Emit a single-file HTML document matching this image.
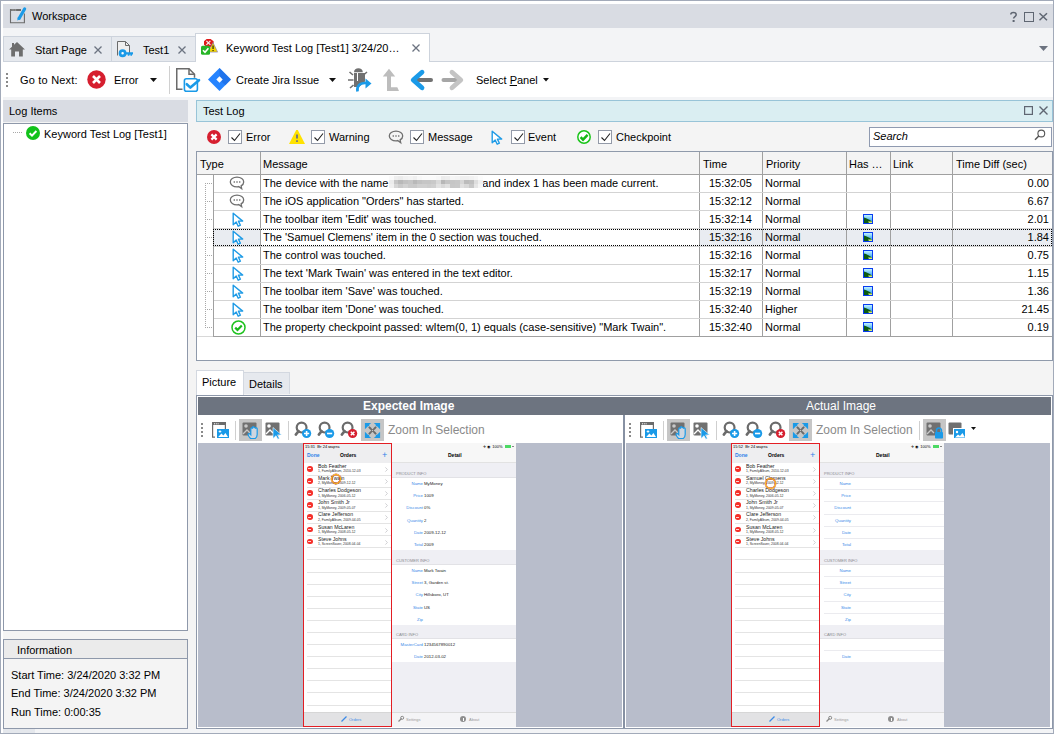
<!DOCTYPE html>
<html><head><meta charset="utf-8">
<style>
*{box-sizing:border-box}
html,body{margin:0;padding:0}
body{width:1054px;height:734px;overflow:hidden;position:relative;background:#f3f4f6;font-family:"Liberation Sans",sans-serif;font-size:11px;color:#000}
.a{position:absolute}
.t{position:absolute;white-space:pre;line-height:13px}
svg{position:absolute;overflow:visible}
.blur{display:inline-block;width:86px;height:9px;background:linear-gradient(90deg,#e4e4e4,#cfcfcf 20%,#dedede 40%,#c9c9c9 60%,#d9d9d9 80%,#cdcdcd);vertical-align:-1px;border-radius:3px;filter:blur(1px)}
.dotsh{background:repeating-linear-gradient(90deg,#a8a8a8 0 1px,transparent 1px 2px)}
.dotsv{background:repeating-linear-gradient(180deg,#a8a8a8 0 1px,transparent 1px 2px)}
.cb{position:absolute;width:14px;height:14px;border:1px solid #939aa8;background:#fff}
.tt{position:absolute;white-space:pre;font-size:5px;line-height:6px}
.sep{position:absolute;width:1px;background:#d0d0d0}
</style></head><body>
<!-- frame -->
<div class="a" style="left:0;top:0;width:1054px;height:734px;border:1px solid #a2aab9"></div>
<div class="a" style="left:1px;top:1px;width:1052px;height:3px;background:#fff"></div>
<div class="a" style="left:1px;top:1px;width:2px;height:732px;background:#fff"></div>
<div class="a" style="left:3px;top:729px;width:32px;height:4px;background:#e4e7ec"></div>
<!-- title bar -->
<div class="a" style="left:3px;top:4px;width:1050px;height:24px;background:#d9dce3"></div>
<div class="t" style="left:32px;top:10px">Workspace</div>

<!-- tab strip -->
<div class="a" style="left:3px;top:36px;width:109px;height:26px;background:#e6e9ee;border:1px solid #cdd3dc;border-bottom:none"></div>
<div class="a" style="left:112px;top:36px;width:84px;height:26px;background:#e6e9ee;border:1px solid #cdd3dc;border-bottom:none;border-left:none"></div>
<div class="a" style="left:3px;top:61px;width:1050px;height:1px;background:#cdd3dc"></div>
<div class="a" style="left:195px;top:33px;width:235px;height:29px;background:#fff;border:1px solid #cdd3dc;border-bottom:none"></div>
<div class="t" style="left:35px;top:44px">Start Page</div>
<div class="t" style="left:143px;top:44px">Test1</div>
<div class="t" style="left:226px;top:42px">Keyword Test Log [Test1] 3/24/20…</div>

<!-- toolbar -->
<div class="a" style="left:3px;top:62px;width:1050px;height:35px;background:#fff"></div>
<div class="t" style="left:20px;top:74px;letter-spacing:.2px">Go to Next:</div>
<div class="t" style="left:114px;top:74px">Error</div>
<div class="t" style="left:236px;top:74px">Create Jira Issue</div>
<div class="t" style="left:476px;top:74px">Select <u>P</u>anel</div>

<div class="a" style="left:3px;top:122px;width:1050px;height:607px;background:#f4f4f4"></div>
<!-- left panel -->
<div class="a" style="left:3px;top:100px;width:185px;height:22px;background:#d9dce3"></div>
<div class="t" style="left:9px;top:105px">Log Items</div>
<div class="a" style="left:3px;top:123px;width:185px;height:508px;background:#fff;border:1px solid #8e98aa"></div>
<div class="t" style="left:44px;top:128px">Keyword Test Log [Test1]</div>

<div class="a" style="left:3px;top:639px;width:185px;height:90px;background:#f4f4f4;border:1px solid #8e98aa"></div>
<div class="a" style="left:4px;top:640px;width:183px;height:19px;background:#ebebeb;border-bottom:1px solid #8e98aa"></div>
<div class="t" style="left:17px;top:644px">Information</div>
<div class="t" style="left:11px;top:669px">Start Time: 3/24/2020 3:32 PM</div>
<div class="t" style="left:11px;top:687px">End Time: 3/24/2020 3:32 PM</div>
<div class="t" style="left:11px;top:706px">Run Time: 0:00:35</div>

<!-- test log panel -->
<div class="a" style="left:196px;top:100px;width:857px;height:22px;background:#daeef2;border:1px solid #98c4d8"></div>
<div class="t" style="left:203px;top:105px">Test Log</div>

<!-- filter bar -->
<div class="cb" style="left:228px;top:130px"><svg style="left:1px;top:1px" width="11" height="11" viewBox="0 0 11 11"><path d="M1.5 5.5l3 3 5.5-7" fill="none" stroke="#222" stroke-width="1.1"/></svg></div>
<div class="t" style="left:246px;top:131px">Error</div>
<div class="cb" style="left:311px;top:130px"><svg style="left:1px;top:1px" width="11" height="11" viewBox="0 0 11 11"><path d="M1.5 5.5l3 3 5.5-7" fill="none" stroke="#222" stroke-width="1.1"/></svg></div>
<div class="t" style="left:329px;top:131px">Warning</div>
<div class="cb" style="left:410px;top:130px"><svg style="left:1px;top:1px" width="11" height="11" viewBox="0 0 11 11"><path d="M1.5 5.5l3 3 5.5-7" fill="none" stroke="#222" stroke-width="1.1"/></svg></div>
<div class="t" style="left:428px;top:131px">Message</div>
<div class="cb" style="left:511px;top:130px"><svg style="left:1px;top:1px" width="11" height="11" viewBox="0 0 11 11"><path d="M1.5 5.5l3 3 5.5-7" fill="none" stroke="#222" stroke-width="1.1"/></svg></div>
<div class="t" style="left:528px;top:131px">Event</div>
<div class="cb" style="left:598px;top:130px"><svg style="left:1px;top:1px" width="11" height="11" viewBox="0 0 11 11"><path d="M1.5 5.5l3 3 5.5-7" fill="none" stroke="#222" stroke-width="1.1"/></svg></div>
<div class="t" style="left:616px;top:131px">Checkpoint</div>
<div class="a" style="left:869px;top:127px;width:183px;height:20px;background:#fff;border:1px solid #8f9ab0"></div>
<div class="t" style="left:873px;top:130px;font-style:italic">Search</div>


<!-- top icons -->
<svg style="left:0;top:0" width="1" height="1"></svg>
<svg style="left:10px;top:7px" width="17" height="17" viewBox="0 0 17 17"><path d="M14.4 6.5v9.3H.5V2.5h9.5" fill="none" stroke="#6b6b6b" stroke-width="1.1"/><rect x="0" y="2" width="11" height="2" fill="#6b6b6b"/><rect x="1.6" y="2.6" width="1" height=".8" fill="#d8d8d8"/><rect x="3.4" y="2.6" width="1" height=".8" fill="#d8d8d8"/><rect x="5.2" y="2.6" width="1" height=".8" fill="#d8d8d8"/><path d="M9.2 11.2L14.6 2" stroke="#1a9ae8" stroke-width="3.2" stroke-linecap="round"/><path d="M7.3 13.6l.5-3.4 3 1.7z" fill="#1a9ae8"/></svg>
<svg style="left:9px;top:42px" width="16" height="15" viewBox="0 0 16 15"><path d="M0 7.5L8 0l8 7.5h-2.2V14.5H10V9.5H6v5H2.2V7.5z" fill="#6e6e6e"/><rect x="3" y="1" width="2" height="4" fill="#6e6e6e"/></svg>
<svg style="left:94px;top:46px" width="8" height="8" viewBox="0 0 8 8"><path d="M0.5 0.5l7 7M7.5 0.5l-7 7" stroke="#6c7380" stroke-width="1.3"/></svg>
<svg style="left:117px;top:41px" width="17" height="16" viewBox="0 0 17 16"><path d="M.5 14.5V.5h8l4 4v9" fill="#efefef" stroke="#6b6b6b" stroke-width="1"/><path d="M8.5.5v4h4" fill="none" stroke="#6b6b6b" stroke-width="1"/><circle cx="5.6" cy="12.3" r="2.6" fill="#fff" stroke="#1a9ae8" stroke-width="2.7"/><path d="M8 11.2h8v2.2h-1v1.3h-1.6v-1.3h-1v1.3H10.8v-1.3H8z" fill="#1a9ae8"/></svg>
<svg style="left:178px;top:46px" width="8" height="8" viewBox="0 0 8 8"><path d="M0.5 0.5l7 7M7.5 0.5l-7 7" stroke="#6c7380" stroke-width="1.3"/></svg>
<svg style="left:201px;top:39px" width="17" height="17" viewBox="0 0 17 17"><path d="M5.6 0h4l3 2.2v3.6l-3 2.2h-4l-2.6-2.2V2.2z" fill="#e01b1b"/><path d="M5.4 1.8l4 4M9.4 1.8l-4 4" stroke="#f2f2f2" stroke-width="1.2"/><path d="M12 3.5l4.6 9.6H7.4z" fill="#f5d800" stroke="#7b72b8" stroke-width=".6"/><rect x="11.5" y="6.5" width="1.1" height="3.5" fill="#111"/><rect x="11.5" y="11" width="1.1" height="1.1" fill="#111"/><rect x="0" y="6.8" width="9" height="9" rx="1.5" fill="#26b526"/><path d="M2 11.2l2 2 3.4-4" fill="none" stroke="#fff" stroke-width="1.6"/></svg>
<svg style="left:412px;top:44px" width="8" height="8" viewBox="0 0 8 8"><path d="M0.5 0.5l7 7M7.5 0.5l-7 7" stroke="#6c7380" stroke-width="1.3"/></svg>
<svg style="left:1010px;top:12px" width="7" height="10" viewBox="0 0 7 10"><path d="M.8 2.6C.8 1.3 2 .5 3.4.5S6.2 1.3 6.2 2.7c0 1.8-2.6 1.9-2.6 3.9" fill="none" stroke="#5f6672" stroke-width="1.5"/><rect x="2.6" y="8" width="2" height="2" fill="#5f6672"/></svg>
<div class="a" style="left:1024px;top:12px;width:9.5px;height:9.5px;border:1.5px solid #5f6672"></div>
<svg style="left:1039px;top:13px" width="8.5" height="7.5" viewBox="0 0 9 8"><path d="M.5 .3l8 7.4M8.5 .3l-8 7.4" stroke="#5f6672" stroke-width="1.6"/></svg>
<svg style="left:1039px;top:46px" width="9" height="5" viewBox="0 0 9 5"><path d="M0 0h9L4.5 5z" fill="#6c7380"/></svg>
<!-- toolbar icons -->
<div class="a" style="left:6px;top:73px;width:2px;height:14px;background:repeating-linear-gradient(180deg,#8a8a8a 0 2px,transparent 2px 4px)"></div>
<svg style="left:87px;top:70px" width="19" height="19" viewBox="0 0 19 19"><circle cx="9.5" cy="9.5" r="9.2" fill="#d61f2f"/><path d="M6 6l7 7M13 6l-7 7" stroke="#fff" stroke-width="2.6"/></svg>
<svg style="left:150px;top:78px" width="7" height="4" viewBox="0 0 7 4"><path d="M0 0h7L3.5 4z" fill="#111"/></svg>
<div class="sep" style="left:169px;top:66px;height:28px"></div>
<svg style="left:176px;top:68px" width="24" height="24" viewBox="0 0 24 24"><path d="M6.5 21.2H.75V.75H13l5.5 5.5v3.5" fill="none" stroke="#6b6b6b" stroke-width="1.5"/><path d="M13 .75v5.5h5.5" fill="none" stroke="#6b6b6b" stroke-width="1.5"/><rect x="8.4" y="10.8" width="13" height="12.4" rx="2" fill="#fff" stroke="#1a9ae8" stroke-width="1.6"/><path d="M10.8 16.2l3.6 3.4 8.6-7.4" fill="none" stroke="#1a9ae8" stroke-width="2.6" stroke-linecap="round" stroke-linejoin="round"/></svg>
<svg style="left:208px;top:68px" width="23" height="23" viewBox="0 0 23 23"><path d="M11.5 0L23 11.5 11.5 23 0 11.5z" fill="#2684ff"/><path d="M11.5 0L23 11.5 17.3 17.2 11.5 11.5z" fill="#1e6fe6" opacity=".8"/><path d="M11.5 8.3l3.2 3.2-3.2 3.2-3.2-3.2z" fill="#fff"/></svg>
<svg style="left:329px;top:78px" width="7" height="4" viewBox="0 0 7 4"><path d="M0 0h7L3.5 4z" fill="#111"/></svg>
<svg style="left:348px;top:68px" width="25" height="24" viewBox="0 0 25 24"><path d="M6 4.2a4.4 4 0 0 1 8.8 0z" fill="#707070"/><path d="M6 5h11v8.5L11 19H6z" fill="#707070"/><path d="M9.5 5v8" stroke="#fff" stroke-width="1"/><path d="M1.5 4l3.5 3M19 4l-3.5 3M0 12h5.5M2 20l3.5-3" stroke="#707070" stroke-width="1.6"/><path d="M9.5 23.5c-1-5 2-8.5 7.5-8.5h1" fill="none" stroke="#1a9ae8" stroke-width="2.6"/><path d="M17.5 10.5l6 5-6 5z" fill="#1a9ae8"/></svg>
<svg style="left:383px;top:68px" width="17" height="24" viewBox="0 0 17 24"><path d="M6 .8L12.2 8.5H8V19.2H14.3L16 23H4V8.5H-.2z" fill="#bdbdbd"/></svg>
<svg style="left:410px;top:69px" width="24" height="22" viewBox="0 0 24 22"><path d="M8.5 11h12.5" stroke="#727272" stroke-width="4" stroke-linecap="round"/><path d="M12 3.2L3.2 11l8.8 7.8" fill="none" stroke="#1a9ae8" stroke-width="4.8" stroke-linecap="round" stroke-linejoin="round"/></svg>
<svg style="left:441px;top:69px" width="24" height="22" viewBox="0 0 24 22"><path d="M2.5 11h12.5" stroke="#a6a6a6" stroke-width="4" stroke-linecap="round"/><path d="M11 3.2L19.8 11 11 18.8" fill="none" stroke="#c4c4c4" stroke-width="4.8" stroke-linecap="round" stroke-linejoin="round"/></svg>
<svg style="left:543px;top:78px" width="6" height="4" viewBox="0 0 6 4"><path d="M0 0h6L3 3.5z" fill="#111"/></svg>
<!-- log tree icon -->
<div class="a dotsh" style="left:13px;top:132px;width:10px;height:1px"></div>
<svg style="left:26px;top:126px" width="14" height="14" viewBox="0 0 14 14"><circle cx="7" cy="7" r="7" fill="#12c21a"/><path d="M3.6 7.2l2.4 2.4 4.4-4.6" fill="none" stroke="#fff" stroke-width="2"/></svg>
<!-- log panel icons -->
<svg style="left:1024px;top:106px" width="9" height="9" viewBox="0 0 9 9"><rect x=".6" y=".6" width="7.8" height="7.8" fill="none" stroke="#5f6672" stroke-width="1.2"/></svg>
<svg style="left:1039px;top:106px" width="9" height="9" viewBox="0 0 9 9"><path d="M.5 .5l8 8M8.5 .5l-8 8" stroke="#5f6672" stroke-width="1.4"/></svg>
<!-- filter icons -->
<svg style="left:207px;top:130px" width="14" height="14" viewBox="0 0 14 14"><circle cx="7" cy="7" r="7" fill="#d61f2f"/><path d="M4.4 4.4l5.2 5.2M9.6 4.4l-5.2 5.2" stroke="#fff" stroke-width="2.2"/></svg>
<svg style="left:289px;top:130px" width="16" height="14" viewBox="0 0 16 14"><path d="M7.2 0h1.6L16 14H0z" fill="#ffe200"/><rect x="7.2" y="4.5" width="1.6" height="4" fill="#56609a"/><rect x="7.2" y="10.3" width="1.6" height="1.6" fill="#56609a"/></svg>
<svg style="left:388px;top:130px" width="16" height="14" viewBox="0 0 16 14"><path d="M8 1.2C4.2 1.2 1.3 3.3 1.3 6s2.9 4.8 6.7 4.8c.6 0 1.2 0 1.7-.2l3 2.2-.6-2.9c1.6-.9 2.6-2.3 2.6-3.9 0-2.7-2.9-4.8-6.7-4.8z" fill="none" stroke="#6f6f6f" stroke-width="1.3"/><rect x="4.6" y="5.3" width="1.4" height="1.4" fill="#6f6f6f"/><rect x="7.3" y="5.3" width="1.4" height="1.4" fill="#6f6f6f"/><rect x="10" y="5.3" width="1.4" height="1.4" fill="#6f6f6f"/></svg>
<svg style="left:491px;top:130px" width="12" height="15" viewBox="0 0 12 15"><path d="M1.2 1.2v11.6l3-2.8 2 4.2 2.2-1-2-4.1h4.3z" fill="#fff" stroke="#1f9be6" stroke-width="1.4" stroke-linejoin="round"/></svg>
<svg style="left:577px;top:130px" width="14" height="14" viewBox="0 0 14 14"><circle cx="7" cy="7" r="6.2" fill="#fff" stroke="#19c419" stroke-width="1.5"/><path d="M3.6 7.2l2.4 2.4 4.6-4.7" fill="none" stroke="#14b814" stroke-width="2.5"/></svg>
<svg style="left:1034px;top:129px" width="12" height="12" viewBox="0 0 12 12"><circle cx="7.3" cy="4.5" r="3.4" fill="none" stroke="#555" stroke-width="1.1"/><path d="M4.8 7L1 10.8" stroke="#555" stroke-width="1.5"/></svg>

<div class="a" style="left:196px;top:151px;width:857px;height:210px;background:#fff;border:1px solid #8f9aab"></div>
<div class="a" style="left:197px;top:152px;width:855px;height:22px;background:#f4f4f4"></div>
<div class="a" style="left:197px;top:174px;width:855px;height:1px;background:#a0a0a0"></div>
<div class="a" style="left:214px;top:229px;width:46px;height:17px;background:#e9ecf1"></div>
<div class="a" style="left:700px;top:229px;width:352px;height:17px;background:#e9ecf1"></div>
<div class="a" style="left:260px;top:152px;width:1px;height:185px;background:#a0a0a0"></div>
<div class="a" style="left:699px;top:152px;width:1px;height:185px;background:#a0a0a0"></div>
<div class="a" style="left:762px;top:152px;width:1px;height:185px;background:#a0a0a0"></div>
<div class="a" style="left:846px;top:152px;width:1px;height:185px;background:#a0a0a0"></div>
<div class="a" style="left:890px;top:152px;width:1px;height:185px;background:#a0a0a0"></div>
<div class="a" style="left:952px;top:152px;width:1px;height:185px;background:#a0a0a0"></div>
<div class="a" style="left:213px;top:175px;width:1px;height:162px;background:#a0a0a0"></div>
<div class="t" style="left:200px;top:158px">Type</div>
<div class="t" style="left:263px;top:158px">Message</div>
<div class="t" style="left:703px;top:158px">Time</div>
<div class="t" style="left:766px;top:158px">Priority</div>
<div class="t" style="left:849px;top:158px">Has …</div>
<div class="t" style="left:893px;top:158px">Link</div>
<div class="t" style="left:956px;top:158px">Time Diff (sec)</div>
<div class="a" style="left:214px;top:192px;width:838px;height:1px;background:#d3d3d3"></div>
<div class="a dotsh" style="left:205px;top:183px;width:8px;height:1px"></div>
<svg style="left:229px;top:176px" width="16" height="14" viewBox="0 0 16 14"><path d="M8 1.2C4.2 1.2 1.3 3.3 1.3 6s2.9 4.8 6.7 4.8c.6 0 1.2 0 1.7-.2l3 2.2-.6-2.9c1.6-.9 2.6-2.3 2.6-3.9 0-2.7-2.9-4.8-6.7-4.8z" fill="none" stroke="#6f6f6f" stroke-width="1.3"/><rect x="4.6" y="5.3" width="1.4" height="1.4" fill="#6f6f6f"/><rect x="7.3" y="5.3" width="1.4" height="1.4" fill="#6f6f6f"/><rect x="10" y="5.3" width="1.4" height="1.4" fill="#6f6f6f"/></svg>
<div class="t" style="left:263px;top:177px">The device with the name<span style="display:inline-block;position:relative;width:93px;height:0;vertical-align:baseline;margin-left:1px"><span class="a" style="left:0;top:-11px;width:94px;height:4px;background:linear-gradient(90deg,#fafafa 0.0px 4.7px,#efefef 4.7px 9.4px,#ececec 9.4px 14.1px,#f2f2f2 14.1px 18.8px,#f4f4f4 18.8px 23.5px,#f0f0f0 23.5px 28.2px,#f8f8f8 28.2px 32.9px,#fbfbfb 32.9px 37.6px,#fbfbfb 37.6px 42.3px,#fbfbfb 42.3px 47.0px,#f8f8f8 47.0px 51.7px,#ececec 51.7px 56.4px,#eeeeee 56.4px 61.1px,#f6f6f6 61.1px 65.8px,#f4f4f4 65.8px 70.5px,#f0f0f0 70.5px 75.2px,#f0f0f0 75.2px 79.9px,#f2f2f2 79.9px 84.6px,#f6f6f6 84.6px 89.3px,#fcfcfc 89.3px 94.0px)"></span><span class="a" style="left:0;top:-7px;width:94px;height:4px;background:linear-gradient(90deg,#ececec 0.0px 4.7px,#c6c6c6 4.7px 9.4px,#b9b9b9 9.4px 14.1px,#c2c2c2 14.1px 18.8px,#c6c6c6 18.8px 23.5px,#b9b9b9 23.5px 28.2px,#c2c2c2 28.2px 32.9px,#c6c6c6 32.9px 37.6px,#c6c6c6 37.6px 42.3px,#c9c9c9 42.3px 47.0px,#d9d9d9 47.0px 51.7px,#b7b7b7 51.7px 56.4px,#c4c4c4 56.4px 61.1px,#c6c6c6 61.1px 65.8px,#c8c8c8 65.8px 70.5px,#d6d6d6 70.5px 75.2px,#bcbcbc 75.2px 79.9px,#c0c0c0 79.9px 84.6px,#dedede 84.6px 89.3px,#f0f0f0 89.3px 94.0px)"></span><span class="a" style="left:0;top:-3px;width:94px;height:4px;background:linear-gradient(90deg,#f0f0f0 0.0px 4.7px,#d6d6d6 4.7px 9.4px,#cacaca 9.4px 14.1px,#d2d2d2 14.1px 18.8px,#cacaca 18.8px 23.5px,#c9c9c9 23.5px 28.2px,#d0d0d0 28.2px 32.9px,#d0d0d0 32.9px 37.6px,#cdcdcd 37.6px 42.3px,#d0d0d0 42.3px 47.0px,#e2e2e2 47.0px 51.7px,#d8d8d8 51.7px 56.4px,#e0e0e0 56.4px 61.1px,#c8c8c8 61.1px 65.8px,#c9c9c9 65.8px 70.5px,#e0e0e0 70.5px 75.2px,#d8d8d8 75.2px 79.9px,#c8c8c8 79.9px 84.6px,#e6e6e6 84.6px 89.3px,#f6f6f6 89.3px 94.0px)"></span></span>and index 1 has been made current.</div>
<div class="t" style="left:709px;top:177px">15:32:05</div>
<div class="t" style="left:765px;top:177px">Normal</div>
<div class="t" style="right:5px;top:177px">0.00</div>
<div class="a" style="left:214px;top:210px;width:838px;height:1px;background:#d3d3d3"></div>
<div class="a dotsh" style="left:205px;top:201px;width:8px;height:1px"></div>
<svg style="left:229px;top:194px" width="16" height="14" viewBox="0 0 16 14"><path d="M8 1.2C4.2 1.2 1.3 3.3 1.3 6s2.9 4.8 6.7 4.8c.6 0 1.2 0 1.7-.2l3 2.2-.6-2.9c1.6-.9 2.6-2.3 2.6-3.9 0-2.7-2.9-4.8-6.7-4.8z" fill="none" stroke="#6f6f6f" stroke-width="1.3"/><rect x="4.6" y="5.3" width="1.4" height="1.4" fill="#6f6f6f"/><rect x="7.3" y="5.3" width="1.4" height="1.4" fill="#6f6f6f"/><rect x="10" y="5.3" width="1.4" height="1.4" fill="#6f6f6f"/></svg>
<div class="t" style="left:263px;top:195px">The iOS application "Orders" has started.</div>
<div class="t" style="left:709px;top:195px">15:32:12</div>
<div class="t" style="left:765px;top:195px">Normal</div>
<div class="t" style="right:5px;top:195px">6.67</div>
<div class="a" style="left:214px;top:228px;width:838px;height:1px;background:#d3d3d3"></div>
<div class="a dotsh" style="left:205px;top:219px;width:8px;height:1px"></div>
<svg style="left:232px;top:212px" width="12" height="15" viewBox="0 0 12 15"><path d="M1.2 1.2v11.6l3-2.8 2 4.2 2.2-1-2-4.1h4.3z" fill="#fff" stroke="#1f9be6" stroke-width="1.4" stroke-linejoin="round"/></svg>
<div class="t" style="left:263px;top:213px">The toolbar item 'Edit' was touched.</div>
<div class="t" style="left:709px;top:213px">15:32:14</div>
<div class="t" style="left:765px;top:213px">Normal</div>
<svg style="left:863px;top:214px" width="10" height="10" viewBox="0 0 10 10"><defs><linearGradient id="sk" x1="0" y1="0" x2="0" y2="1"><stop offset="0" stop-color="#bff4ff"/><stop offset="1" stop-color="#1c8ee8"/></linearGradient></defs><rect x="0" y="0" width="10" height="10" fill="#0a3cf0"/><rect x="1" y="1" width="8" height="8" fill="url(#sk)"/><path d="M1 3.5C3 3.8 5 5 9 7.5V9H1z" fill="#0b5a12"/><path d="M5 7.5l4 0V9H6z" fill="#d8f070"/></svg>
<div class="t" style="right:5px;top:213px">2.01</div>
<div class="a" style="left:214px;top:246px;width:838px;height:1px;background:#d3d3d3"></div>
<div class="a dotsh" style="left:205px;top:237px;width:8px;height:1px"></div>
<svg style="left:232px;top:230px" width="12" height="15" viewBox="0 0 12 15"><path d="M1.2 1.2v11.6l3-2.8 2 4.2 2.2-1-2-4.1h4.3z" fill="#fff" stroke="#1f9be6" stroke-width="1.4" stroke-linejoin="round"/></svg>
<div class="t" style="left:263px;top:231px">The 'Samuel Clemens' item in the 0 section was touched.</div>
<div class="t" style="left:709px;top:231px">15:32:16</div>
<div class="t" style="left:765px;top:231px">Normal</div>
<svg style="left:863px;top:232px" width="10" height="10" viewBox="0 0 10 10"><defs><linearGradient id="sk" x1="0" y1="0" x2="0" y2="1"><stop offset="0" stop-color="#bff4ff"/><stop offset="1" stop-color="#1c8ee8"/></linearGradient></defs><rect x="0" y="0" width="10" height="10" fill="#0a3cf0"/><rect x="1" y="1" width="8" height="8" fill="url(#sk)"/><path d="M1 3.5C3 3.8 5 5 9 7.5V9H1z" fill="#0b5a12"/><path d="M5 7.5l4 0V9H6z" fill="#d8f070"/></svg>
<div class="t" style="right:5px;top:231px">1.84</div>
<div class="a" style="left:214px;top:264px;width:838px;height:1px;background:#d3d3d3"></div>
<div class="a dotsh" style="left:205px;top:255px;width:8px;height:1px"></div>
<svg style="left:232px;top:248px" width="12" height="15" viewBox="0 0 12 15"><path d="M1.2 1.2v11.6l3-2.8 2 4.2 2.2-1-2-4.1h4.3z" fill="#fff" stroke="#1f9be6" stroke-width="1.4" stroke-linejoin="round"/></svg>
<div class="t" style="left:263px;top:249px">The control was touched.</div>
<div class="t" style="left:709px;top:249px">15:32:16</div>
<div class="t" style="left:765px;top:249px">Normal</div>
<svg style="left:863px;top:250px" width="10" height="10" viewBox="0 0 10 10"><defs><linearGradient id="sk" x1="0" y1="0" x2="0" y2="1"><stop offset="0" stop-color="#bff4ff"/><stop offset="1" stop-color="#1c8ee8"/></linearGradient></defs><rect x="0" y="0" width="10" height="10" fill="#0a3cf0"/><rect x="1" y="1" width="8" height="8" fill="url(#sk)"/><path d="M1 3.5C3 3.8 5 5 9 7.5V9H1z" fill="#0b5a12"/><path d="M5 7.5l4 0V9H6z" fill="#d8f070"/></svg>
<div class="t" style="right:5px;top:249px">0.75</div>
<div class="a" style="left:214px;top:282px;width:838px;height:1px;background:#d3d3d3"></div>
<div class="a dotsh" style="left:205px;top:273px;width:8px;height:1px"></div>
<svg style="left:232px;top:266px" width="12" height="15" viewBox="0 0 12 15"><path d="M1.2 1.2v11.6l3-2.8 2 4.2 2.2-1-2-4.1h4.3z" fill="#fff" stroke="#1f9be6" stroke-width="1.4" stroke-linejoin="round"/></svg>
<div class="t" style="left:263px;top:267px">The text 'Mark Twain' was entered in the text editor.</div>
<div class="t" style="left:709px;top:267px">15:32:17</div>
<div class="t" style="left:765px;top:267px">Normal</div>
<svg style="left:863px;top:268px" width="10" height="10" viewBox="0 0 10 10"><defs><linearGradient id="sk" x1="0" y1="0" x2="0" y2="1"><stop offset="0" stop-color="#bff4ff"/><stop offset="1" stop-color="#1c8ee8"/></linearGradient></defs><rect x="0" y="0" width="10" height="10" fill="#0a3cf0"/><rect x="1" y="1" width="8" height="8" fill="url(#sk)"/><path d="M1 3.5C3 3.8 5 5 9 7.5V9H1z" fill="#0b5a12"/><path d="M5 7.5l4 0V9H6z" fill="#d8f070"/></svg>
<div class="t" style="right:5px;top:267px">1.15</div>
<div class="a" style="left:214px;top:300px;width:838px;height:1px;background:#d3d3d3"></div>
<div class="a dotsh" style="left:205px;top:291px;width:8px;height:1px"></div>
<svg style="left:232px;top:284px" width="12" height="15" viewBox="0 0 12 15"><path d="M1.2 1.2v11.6l3-2.8 2 4.2 2.2-1-2-4.1h4.3z" fill="#fff" stroke="#1f9be6" stroke-width="1.4" stroke-linejoin="round"/></svg>
<div class="t" style="left:263px;top:285px">The toolbar item 'Save' was touched.</div>
<div class="t" style="left:709px;top:285px">15:32:19</div>
<div class="t" style="left:765px;top:285px">Normal</div>
<svg style="left:863px;top:286px" width="10" height="10" viewBox="0 0 10 10"><defs><linearGradient id="sk" x1="0" y1="0" x2="0" y2="1"><stop offset="0" stop-color="#bff4ff"/><stop offset="1" stop-color="#1c8ee8"/></linearGradient></defs><rect x="0" y="0" width="10" height="10" fill="#0a3cf0"/><rect x="1" y="1" width="8" height="8" fill="url(#sk)"/><path d="M1 3.5C3 3.8 5 5 9 7.5V9H1z" fill="#0b5a12"/><path d="M5 7.5l4 0V9H6z" fill="#d8f070"/></svg>
<div class="t" style="right:5px;top:285px">1.36</div>
<div class="a" style="left:214px;top:318px;width:838px;height:1px;background:#d3d3d3"></div>
<div class="a dotsh" style="left:205px;top:309px;width:8px;height:1px"></div>
<svg style="left:232px;top:302px" width="12" height="15" viewBox="0 0 12 15"><path d="M1.2 1.2v11.6l3-2.8 2 4.2 2.2-1-2-4.1h4.3z" fill="#fff" stroke="#1f9be6" stroke-width="1.4" stroke-linejoin="round"/></svg>
<div class="t" style="left:263px;top:303px">The toolbar item 'Done' was touched.</div>
<div class="t" style="left:709px;top:303px">15:32:40</div>
<div class="t" style="left:765px;top:303px">Higher</div>
<svg style="left:863px;top:304px" width="10" height="10" viewBox="0 0 10 10"><defs><linearGradient id="sk" x1="0" y1="0" x2="0" y2="1"><stop offset="0" stop-color="#bff4ff"/><stop offset="1" stop-color="#1c8ee8"/></linearGradient></defs><rect x="0" y="0" width="10" height="10" fill="#0a3cf0"/><rect x="1" y="1" width="8" height="8" fill="url(#sk)"/><path d="M1 3.5C3 3.8 5 5 9 7.5V9H1z" fill="#0b5a12"/><path d="M5 7.5l4 0V9H6z" fill="#d8f070"/></svg>
<div class="t" style="right:5px;top:303px">21.45</div>
<div class="a" style="left:214px;top:336px;width:838px;height:1px;background:#a0a0a0"></div>
<div class="a dotsh" style="left:205px;top:327px;width:8px;height:1px"></div>
<svg style="left:231px;top:320px" width="15" height="15" viewBox="0 0 15 15"><circle cx="7.5" cy="7.5" r="6.5" fill="#fff" stroke="#1ec21e" stroke-width="1.5"/><path d="M4.2 7.6l2.3 2.3 4.3-4.4" fill="none" stroke="#18b818" stroke-width="2.2"/></svg>
<div class="t" style="left:263px;top:321px">The property checkpoint passed: wItem(0, 1) equals (case-sensitive) "Mark Twain".</div>
<div class="t" style="left:709px;top:321px">15:32:40</div>
<div class="t" style="left:765px;top:321px">Normal</div>
<svg style="left:863px;top:322px" width="10" height="10" viewBox="0 0 10 10"><defs><linearGradient id="sk" x1="0" y1="0" x2="0" y2="1"><stop offset="0" stop-color="#bff4ff"/><stop offset="1" stop-color="#1c8ee8"/></linearGradient></defs><rect x="0" y="0" width="10" height="10" fill="#0a3cf0"/><rect x="1" y="1" width="8" height="8" fill="url(#sk)"/><path d="M1 3.5C3 3.8 5 5 9 7.5V9H1z" fill="#0b5a12"/><path d="M5 7.5l4 0V9H6z" fill="#d8f070"/></svg>
<div class="t" style="right:5px;top:321px">0.19</div>
<div class="a dotsv" style="left:205px;top:183px;width:1px;height:145px"></div>
<div class="a" style="left:197px;top:336px;width:16px;height:1px;background:#d8d8d8"></div>
<div class="a" style="left:213px;top:229px;width:839px;height:17px;border:1px dotted #000"></div>

<!-- picture/details tabs -->
<div class="a" style="left:196px;top:370px;width:48px;height:26px;background:#fff;border:1px solid #d3d8e0;border-bottom:none"></div>
<div class="a" style="left:244px;top:372px;width:46px;height:22px;background:#e6e9ee;border:1px solid #d3d8e0;border-left:none;border-bottom:none"></div>
<div class="t" style="left:202px;top:376px">Picture</div>
<div class="t" style="left:249px;top:378px">Details</div>

<!-- image viewer panel -->
<div class="a" style="left:196px;top:395px;width:857px;height:334px;background:#fff;border:1px solid #8e98aa"></div>
<div class="a" style="left:198px;top:397px;width:853px;height:18px;background:#6d7480"></div>
<div class="t" style="left:363px;top:400px;color:#fff;font-weight:bold;font-size:12px">Expected Image</div>
<div class="t" style="left:806px;top:400px;color:#fff;font-size:12px">Actual Image</div>
<div class="t" style="left:388px;top:424px;color:#8a8a8a;font-size:12px">Zoom In Selection</div>
<div class="t" style="left:816px;top:424px;color:#8a8a8a;font-size:12px">Zoom In Selection</div>
<div class="a" style="left:198px;top:443px;width:424px;height:284px;background:#b8bdcb"></div>
<div class="a" style="left:623px;top:415px;width:2px;height:313px;background:#8791a3"></div>
<div class="a" style="left:626px;top:443px;width:424px;height:284px;background:#b8bdcb"></div>

<div class="a" style="left:201px;top:423px;width:2px;height:14px;background:repeating-linear-gradient(180deg,#8a8a8a 0 2px,transparent 2px 4px)"></div>
<svg style="left:212px;top:422px" width="17" height="16" viewBox="0 0 17 16"><path d="M3 15.2H.6V.6h12.8v7" fill="none" stroke="#6b6b6b" stroke-width="1.2"/><rect x=".6" y=".6" width="12.8" height="2.4" fill="#6b6b6b"/><rect x="2" y="1.3" width="1" height="1" fill="#fff"/><rect x="3.8" y="1.3" width="1" height="1" fill="#fff"/><rect x="5.6" y="1.3" width="1" height="1" fill="#fff"/><rect x="5" y="7" width="12" height="9" fill="#1a9ae8"/><path d="M6.2 15l3.2-3.5 2 2 2-2.6 2.6 4.1z" fill="#fff"/><path d="M8 8.2v2.6M6.7 9.5h2.6" stroke="#fff" stroke-width=".9"/></svg>
<div class="a" style="left:235px;top:421px;width:1px;height:19px;background:#cfcfcf"></div>
<div class="a" style="left:239px;top:419px;width:23px;height:22px;background:#c6c6c6"></div>
<svg style="left:242px;top:422px" width="18" height="17" viewBox="0 0 18 17"><rect x=".5" y=".5" width="14" height="13" rx="1" fill="#707070"/><circle cx="4" cy="4" r="1.8" fill="#c8c8c8"/><path d="M1 12l4-4 3 3" fill="none" stroke="#c8c8c8" stroke-width="1.3"/><path d="M8.5 16.5c-1.5-1.5-2.5-3-2.5-4.5l1.2-.6 1.6 1.5V6.8c0-1.2 1.6-1.2 1.6 0V5.6c0-1.2 1.6-1.2 1.6 0v.6c0-1.2 1.6-1.2 1.6 0v.6c0-1.2 1.6-1.2 1.6 0v5.6c0 2-1 3.3-2 4.1z" fill="#cfd6e0" stroke="#1a9ae8" stroke-width="1.2"/></svg>
<svg style="left:265px;top:422px" width="17" height="17" viewBox="0 0 17 17"><rect x=".5" y=".5" width="14" height="13" rx="1" fill="#707070"/><circle cx="4" cy="4" r="1.8" fill="#fff"/><path d="M1 12l4-4 3 3" fill="none" stroke="#fff" stroke-width="1.3"/><path d="M8 5.5v11l3-2.8 1.8 3.5 1.6-.8-1.8-3.5h4z" fill="#1a9ae8" stroke="#fff" stroke-width=".6"/></svg>
<div class="a" style="left:288px;top:421px;width:1px;height:19px;background:#cfcfcf"></div>
<svg style="left:294px;top:421px" width="17" height="18" viewBox="0 0 17 18"><circle cx="7.6" cy="6.6" r="4.9" fill="none" stroke="#6b6b6b" stroke-width="2.2"/><path d="M4.6 10.2L1.8 13.6" stroke="#6b6b6b" stroke-width="2.6" stroke-linecap="round"/><circle cx="12.6" cy="12.5" r="4.6" fill="#1a9ae8"/><path d="M10 12.5h5.2M12.6 9.9v5.2" stroke="#fff" stroke-width="1.6"/></svg>
<svg style="left:317px;top:421px" width="17" height="18" viewBox="0 0 17 18"><circle cx="7.6" cy="6.6" r="4.9" fill="none" stroke="#6b6b6b" stroke-width="2.2"/><path d="M4.6 10.2L1.8 13.6" stroke="#6b6b6b" stroke-width="2.6" stroke-linecap="round"/><circle cx="12.6" cy="12.5" r="4.6" fill="#1a9ae8"/><path d="M10 12.5h5.2" stroke="#fff" stroke-width="1.6"/></svg>
<svg style="left:340px;top:421px" width="17" height="18" viewBox="0 0 17 18"><circle cx="7.6" cy="6.6" r="4.9" fill="none" stroke="#6b6b6b" stroke-width="2.2"/><path d="M4.6 10.2L1.8 13.6" stroke="#6b6b6b" stroke-width="2.6" stroke-linecap="round"/><circle cx="12.6" cy="12.5" r="4.6" fill="#d61f2f"/><path d="M10.8 10.7l3.6 3.6M14.4 10.7l-3.6 3.6" stroke="#fff" stroke-width="1.5"/></svg>
<div class="a" style="left:361px;top:419px;width:23px;height:22px;background:#c6c6c6"></div>
<svg style="left:364px;top:421.5px" width="17" height="17" viewBox="-0.5 -0.5 19 19"><path d="M5 5L7.6 7.6M13 5L10.4 7.6M5 13L7.6 10.4M13 13L10.4 10.4" stroke="#6b6b6b" stroke-width="2.2"/><rect x="7.8" y="7.8" width="2.4" height="2.4" fill="none" stroke="#6b6b6b" stroke-width="1"/><path d="M.5 .5h7l-2.2 2.2v1.6h-1.4l-3.4 3.4z" fill="#1a9ae8"/><path d="M17.5 .5h-7l2.2 2.2v1.6h1.4l3.4 3.4z" fill="#1a9ae8"/><path d="M.5 17.5h7l-2.2-2.2v-1.6h-1.4l-3.4-3.4z" fill="#1a9ae8"/><path d="M17.5 17.5h-7l2.2-2.2v-1.6h1.4l3.4-3.4z" fill="#1a9ae8"/></svg><div class="a" style="left:629px;top:423px;width:2px;height:14px;background:repeating-linear-gradient(180deg,#8a8a8a 0 2px,transparent 2px 4px)"></div>
<svg style="left:640px;top:422px" width="17" height="16" viewBox="0 0 17 16"><path d="M3 15.2H.6V.6h12.8v7" fill="none" stroke="#6b6b6b" stroke-width="1.2"/><rect x=".6" y=".6" width="12.8" height="2.4" fill="#6b6b6b"/><rect x="2" y="1.3" width="1" height="1" fill="#fff"/><rect x="3.8" y="1.3" width="1" height="1" fill="#fff"/><rect x="5.6" y="1.3" width="1" height="1" fill="#fff"/><rect x="5" y="7" width="12" height="9" fill="#1a9ae8"/><path d="M6.2 15l3.2-3.5 2 2 2-2.6 2.6 4.1z" fill="#fff"/><path d="M8 8.2v2.6M6.7 9.5h2.6" stroke="#fff" stroke-width=".9"/></svg>
<div class="a" style="left:663px;top:421px;width:1px;height:19px;background:#cfcfcf"></div>
<div class="a" style="left:667px;top:419px;width:23px;height:22px;background:#c6c6c6"></div>
<svg style="left:670px;top:422px" width="18" height="17" viewBox="0 0 18 17"><rect x=".5" y=".5" width="14" height="13" rx="1" fill="#707070"/><circle cx="4" cy="4" r="1.8" fill="#c8c8c8"/><path d="M1 12l4-4 3 3" fill="none" stroke="#c8c8c8" stroke-width="1.3"/><path d="M8.5 16.5c-1.5-1.5-2.5-3-2.5-4.5l1.2-.6 1.6 1.5V6.8c0-1.2 1.6-1.2 1.6 0V5.6c0-1.2 1.6-1.2 1.6 0v.6c0-1.2 1.6-1.2 1.6 0v.6c0-1.2 1.6-1.2 1.6 0v5.6c0 2-1 3.3-2 4.1z" fill="#cfd6e0" stroke="#1a9ae8" stroke-width="1.2"/></svg>
<svg style="left:693px;top:422px" width="17" height="17" viewBox="0 0 17 17"><rect x=".5" y=".5" width="14" height="13" rx="1" fill="#707070"/><circle cx="4" cy="4" r="1.8" fill="#fff"/><path d="M1 12l4-4 3 3" fill="none" stroke="#fff" stroke-width="1.3"/><path d="M8 5.5v11l3-2.8 1.8 3.5 1.6-.8-1.8-3.5h4z" fill="#1a9ae8" stroke="#fff" stroke-width=".6"/></svg>
<div class="a" style="left:716px;top:421px;width:1px;height:19px;background:#cfcfcf"></div>
<svg style="left:722px;top:421px" width="17" height="18" viewBox="0 0 17 18"><circle cx="7.6" cy="6.6" r="4.9" fill="none" stroke="#6b6b6b" stroke-width="2.2"/><path d="M4.6 10.2L1.8 13.6" stroke="#6b6b6b" stroke-width="2.6" stroke-linecap="round"/><circle cx="12.6" cy="12.5" r="4.6" fill="#1a9ae8"/><path d="M10 12.5h5.2M12.6 9.9v5.2" stroke="#fff" stroke-width="1.6"/></svg>
<svg style="left:745px;top:421px" width="17" height="18" viewBox="0 0 17 18"><circle cx="7.6" cy="6.6" r="4.9" fill="none" stroke="#6b6b6b" stroke-width="2.2"/><path d="M4.6 10.2L1.8 13.6" stroke="#6b6b6b" stroke-width="2.6" stroke-linecap="round"/><circle cx="12.6" cy="12.5" r="4.6" fill="#1a9ae8"/><path d="M10 12.5h5.2" stroke="#fff" stroke-width="1.6"/></svg>
<svg style="left:768px;top:421px" width="17" height="18" viewBox="0 0 17 18"><circle cx="7.6" cy="6.6" r="4.9" fill="none" stroke="#6b6b6b" stroke-width="2.2"/><path d="M4.6 10.2L1.8 13.6" stroke="#6b6b6b" stroke-width="2.6" stroke-linecap="round"/><circle cx="12.6" cy="12.5" r="4.6" fill="#d61f2f"/><path d="M10.8 10.7l3.6 3.6M14.4 10.7l-3.6 3.6" stroke="#fff" stroke-width="1.5"/></svg>
<div class="a" style="left:789px;top:419px;width:23px;height:22px;background:#c6c6c6"></div>
<svg style="left:792px;top:421.5px" width="17" height="17" viewBox="-0.5 -0.5 19 19"><path d="M5 5L7.6 7.6M13 5L10.4 7.6M5 13L7.6 10.4M13 13L10.4 10.4" stroke="#6b6b6b" stroke-width="2.2"/><rect x="7.8" y="7.8" width="2.4" height="2.4" fill="none" stroke="#6b6b6b" stroke-width="1"/><path d="M.5 .5h7l-2.2 2.2v1.6h-1.4l-3.4 3.4z" fill="#1a9ae8"/><path d="M17.5 .5h-7l2.2 2.2v1.6h1.4l3.4 3.4z" fill="#1a9ae8"/><path d="M.5 17.5h7l-2.2-2.2v-1.6h-1.4l-3.4-3.4z" fill="#1a9ae8"/><path d="M17.5 17.5h-7l2.2-2.2v-1.6h1.4l3.4-3.4z" fill="#1a9ae8"/></svg>
<div class="a" style="left:919px;top:421px;width:1px;height:19px;background:#cfcfcf"></div>
<div class="a" style="left:923px;top:419px;width:23px;height:22px;background:#c6c6c6"></div>
<svg style="left:926px;top:422px" width="18" height="17" viewBox="0 0 18 17"><rect x=".5" y=".5" width="14" height="13" rx="1" fill="#707070"/><circle cx="4" cy="4" r="1.8" fill="#c8c8c8"/><path d="M1 12l4-4 3 3" fill="none" stroke="#c8c8c8" stroke-width="1.3"/><path d="M10.5 10V8.5a2.5 2.5 0 0 1 5 0V10" fill="none" stroke="#1a9ae8" stroke-width="1.5"/><rect x="9" y="10" width="8" height="6.5" rx=".8" fill="#1a9ae8"/></svg>
<svg style="left:948px;top:422px" width="18" height="17" viewBox="0 0 18 17"><rect x=".5" y=".5" width="13" height="12" rx="1" fill="#707070"/><rect x="5" y="6" width="12.5" height="10.5" fill="#fff"/><rect x="6" y="7" width="11" height="9" fill="#1a9ae8"/><circle cx="9" cy="10" r="1.2" fill="#fff"/><path d="M7 15.5l3-3 2 1.5 2.5-3 2.5 4.5z" fill="#fff"/></svg>
<svg style="left:971px;top:427px" width="5" height="3" viewBox="0 0 5 3"><path d="M0 0h5L2.5 3z" fill="#111"/></svg><div class="a" style="left:303px;top:443px;width:89px;height:284px;background:#fff"></div>
<div class="a" style="left:303px;top:443px;width:89px;height:20px;background:#eeeef0"></div>
<div class="a" style="left:307px;top:475px;width:84px;height:1px;background:#e4e4e4"></div>
<div class="a" style="left:307px;top:487px;width:84px;height:1px;background:#e4e4e4"></div>
<div class="a" style="left:307px;top:499px;width:84px;height:1px;background:#e4e4e4"></div>
<div class="a" style="left:307px;top:511px;width:84px;height:1px;background:#e4e4e4"></div>
<div class="a" style="left:307px;top:523px;width:84px;height:1px;background:#e4e4e4"></div>
<div class="a" style="left:307px;top:535px;width:84px;height:1px;background:#e4e4e4"></div>
<div class="a" style="left:307px;top:547px;width:84px;height:1px;background:#e4e4e4"></div>
<div class="a" style="left:307px;top:559px;width:84px;height:1px;background:#e4e4e4"></div>
<div class="a" style="left:307px;top:572px;width:84px;height:1px;background:#e4e4e4"></div>
<div class="a" style="left:307px;top:584px;width:84px;height:1px;background:#e4e4e4"></div>
<div class="a" style="left:307px;top:596px;width:84px;height:1px;background:#e4e4e4"></div>
<div class="a" style="left:307px;top:608px;width:84px;height:1px;background:#e4e4e4"></div>
<div class="a" style="left:307px;top:620px;width:84px;height:1px;background:#e4e4e4"></div>
<div class="a" style="left:307px;top:632px;width:84px;height:1px;background:#e4e4e4"></div>
<div class="a" style="left:307px;top:644px;width:84px;height:1px;background:#e4e4e4"></div>
<div class="a" style="left:307px;top:656px;width:84px;height:1px;background:#e4e4e4"></div>
<div class="a" style="left:307px;top:668px;width:84px;height:1px;background:#e4e4e4"></div>
<div class="a" style="left:307px;top:680px;width:84px;height:1px;background:#e4e4e4"></div>
<div class="a" style="left:307px;top:692px;width:84px;height:1px;background:#e4e4e4"></div>
<div class="a" style="left:307px;top:705px;width:84px;height:1px;background:#e4e4e4"></div>
<div class="a" style="left:303px;top:712px;width:89px;height:15px;background:#e2e2e4;border-top:1px solid #d6d6d6"></div>
<svg style="left:341px;top:716px" width="6" height="6" viewBox="0 0 6 6"><path d="M.5 5.5L5.5 .5" stroke="#3b8ae8" stroke-width="1.3"/></svg>
<div class="tt" style="left:349px;top:716.5px;color:#3b8ae8;font-size:4px">Orders</div>
<div class="tt" style="left:305px;top:444px;font-size:4px">15:31  Вт 24 марта</div>
<div class="tt" style="left:307px;top:452px;color:#2f7fe8;font-weight:bold">Done</div>
<div class="tt" style="left:340px;top:452px;font-weight:bold">Orders</div>
<div class="tt" style="left:382px;top:452px;color:#2f7fe8;font-size:9px;line-height:7px">+</div>
<div class="a" style="left:307px;top:466.0px;width:5.5px;height:5.5px;border-radius:50%;background:#f5302a"></div>
<div class="a" style="left:308.3px;top:468.4px;width:3px;height:.6px;background:#ffd0d0"></div>
<div class="tt" style="left:318px;top:463.0px;font-size:5.2px;color:#222">Bob Feather</div>
<div class="tt" style="left:318px;top:468.3px;font-size:3.4px;color:#333">1, FamilyAlbum, 2010-12-03</div>
<svg style="left:385px;top:467.0px" width="3" height="5" viewBox="0 0 3 5"><path d="M.4 .4L2.4 2.5.4 4.6" fill="none" stroke="#c4c4c8" stroke-width=".8"/></svg>
<div class="a" style="left:307px;top:478.1px;width:5.5px;height:5.5px;border-radius:50%;background:#f5302a"></div>
<div class="a" style="left:308.3px;top:480.5px;width:3px;height:.6px;background:#ffd0d0"></div>
<div class="tt" style="left:318px;top:475.1px;font-size:5.2px;color:#222">Mark Twain</div>
<div class="tt" style="left:318px;top:480.4px;font-size:3.4px;color:#333">2, MyMoney, 2009-12-12</div>
<svg style="left:385px;top:479.1px" width="3" height="5" viewBox="0 0 3 5"><path d="M.4 .4L2.4 2.5.4 4.6" fill="none" stroke="#c4c4c8" stroke-width=".8"/></svg>
<div class="a" style="left:307px;top:490.2px;width:5.5px;height:5.5px;border-radius:50%;background:#f5302a"></div>
<div class="a" style="left:308.3px;top:492.6px;width:3px;height:.6px;background:#ffd0d0"></div>
<div class="tt" style="left:318px;top:487.2px;font-size:5.2px;color:#222">Charles Dodgeson</div>
<div class="tt" style="left:318px;top:492.5px;font-size:3.4px;color:#333">1, MyMoney, 2006-05-12</div>
<svg style="left:385px;top:491.2px" width="3" height="5" viewBox="0 0 3 5"><path d="M.4 .4L2.4 2.5.4 4.6" fill="none" stroke="#c4c4c8" stroke-width=".8"/></svg>
<div class="a" style="left:307px;top:502.3px;width:5.5px;height:5.5px;border-radius:50%;background:#f5302a"></div>
<div class="a" style="left:308.3px;top:504.7px;width:3px;height:.6px;background:#ffd0d0"></div>
<div class="tt" style="left:318px;top:499.3px;font-size:5.2px;color:#222">John Smith Jr</div>
<div class="tt" style="left:318px;top:504.6px;font-size:3.4px;color:#333">1, MyMoney, 2009-05-07</div>
<svg style="left:385px;top:503.3px" width="3" height="5" viewBox="0 0 3 5"><path d="M.4 .4L2.4 2.5.4 4.6" fill="none" stroke="#c4c4c8" stroke-width=".8"/></svg>
<div class="a" style="left:307px;top:514.4px;width:5.5px;height:5.5px;border-radius:50%;background:#f5302a"></div>
<div class="a" style="left:308.3px;top:516.8px;width:3px;height:.6px;background:#ffd0d0"></div>
<div class="tt" style="left:318px;top:511.4px;font-size:5.2px;color:#222">Clare Jefferson</div>
<div class="tt" style="left:318px;top:516.7px;font-size:3.4px;color:#333">2, FamilyAlbum, 2009-04-05</div>
<svg style="left:385px;top:515.4px" width="3" height="5" viewBox="0 0 3 5"><path d="M.4 .4L2.4 2.5.4 4.6" fill="none" stroke="#c4c4c8" stroke-width=".8"/></svg>
<div class="a" style="left:307px;top:526.5px;width:5.5px;height:5.5px;border-radius:50%;background:#f5302a"></div>
<div class="a" style="left:308.3px;top:528.9px;width:3px;height:.6px;background:#ffd0d0"></div>
<div class="tt" style="left:318px;top:523.5px;font-size:5.2px;color:#222">Susan McLaren</div>
<div class="tt" style="left:318px;top:528.8px;font-size:3.4px;color:#333">1, MyMoney, 2008-05-12</div>
<svg style="left:385px;top:527.5px" width="3" height="5" viewBox="0 0 3 5"><path d="M.4 .4L2.4 2.5.4 4.6" fill="none" stroke="#c4c4c8" stroke-width=".8"/></svg>
<div class="a" style="left:307px;top:538.6px;width:5.5px;height:5.5px;border-radius:50%;background:#f5302a"></div>
<div class="a" style="left:308.3px;top:541.0px;width:3px;height:.6px;background:#ffd0d0"></div>
<div class="tt" style="left:318px;top:535.6px;font-size:5.2px;color:#222">Steve Johns</div>
<div class="tt" style="left:318px;top:540.9px;font-size:3.4px;color:#333">1, ScreenSaver, 2008-04-04</div>
<svg style="left:385px;top:539.6px" width="3" height="5" viewBox="0 0 3 5"><path d="M.4 .4L2.4 2.5.4 4.6" fill="none" stroke="#c4c4c8" stroke-width=".8"/></svg>
<div class="a" style="left:330.5px;top:473.5px;width:10px;height:10px;border-radius:50%;border:1.2px solid #f2b400;box-shadow:inset 0 0 0 .6px #e03a20,0 0 0 .4px #d84020"></div>
<div class="a" style="left:303px;top:443px;width:89px;height:284px;border:1px solid #e31e24"></div>
<div class="a" style="left:392px;top:443px;width:124px;height:284px;background:#efeff4"></div>
<div class="a" style="left:392px;top:443px;width:124px;height:20px;background:#f7f7f7;border-bottom:1px solid #e2e2e2"></div>
<div class="tt" style="left:448px;top:452px;font-weight:bold">Detail</div>
<div class="tt" style="left:483px;top:443.5px;font-size:4px">✈ ◉  100%</div>
<div class="a" style="left:505px;top:445px;width:6px;height:2.5px;background:#4cd964"></div>
<div class="a" style="left:512px;top:445.5px;width:1.5px;height:1.5px;background:#888"></div>
<div class="tt" style="left:396px;top:471px;font-size:4px;color:#8a8a8f">PRODUCT INFO</div>
<div class="a" style="left:392px;top:477px;width:124px;height:73px;background:#fff;border-top:1px solid #e2e2e6"></div>
<div class="tt" style="right:631px;top:481.0px;color:#3b8ae8;font-size:4.3px">Name</div>
<div class="tt" style="left:424px;top:481.0px;color:#222;font-size:4.3px">MyMoney</div>
<div class="tt" style="right:631px;top:493.2px;color:#3b8ae8;font-size:4.3px">Price</div>
<div class="tt" style="left:424px;top:493.2px;color:#222;font-size:4.3px">1009</div>
<div class="tt" style="right:631px;top:505.4px;color:#3b8ae8;font-size:4.3px">Discount</div>
<div class="tt" style="left:424px;top:505.4px;color:#222;font-size:4.3px">0%</div>
<div class="tt" style="right:631px;top:517.6px;color:#3b8ae8;font-size:4.3px">Quantity</div>
<div class="tt" style="left:424px;top:517.6px;color:#222;font-size:4.3px">2</div>
<div class="tt" style="right:631px;top:529.8px;color:#3b8ae8;font-size:4.3px">Date</div>
<div class="tt" style="left:424px;top:529.8px;color:#222;font-size:4.3px">2009-12-12</div>
<div class="tt" style="right:631px;top:542.0px;color:#3b8ae8;font-size:4.3px">Total</div>
<div class="tt" style="left:424px;top:542.0px;color:#222;font-size:4.3px">2009</div>
<div class="tt" style="left:396px;top:558px;font-size:4px;color:#8a8a8f">CUSTOMER INFO</div>
<div class="a" style="left:392px;top:564px;width:124px;height:61px;background:#fff;border-top:1px solid #e2e2e6"></div>
<div class="tt" style="right:631px;top:568.0px;color:#3b8ae8;font-size:4.3px">Name</div>
<div class="tt" style="left:424px;top:568.0px;color:#222;font-size:4.3px">Mark Twain</div>
<div class="tt" style="right:631px;top:580.2px;color:#3b8ae8;font-size:4.3px">Street</div>
<div class="tt" style="left:424px;top:580.2px;color:#222;font-size:4.3px">3, Garden st.</div>
<div class="tt" style="right:631px;top:592.4px;color:#3b8ae8;font-size:4.3px">City</div>
<div class="tt" style="left:424px;top:592.4px;color:#222;font-size:4.3px">Hillsboro, UT</div>
<div class="tt" style="right:631px;top:604.6px;color:#3b8ae8;font-size:4.3px">State</div>
<div class="tt" style="left:424px;top:604.6px;color:#222;font-size:4.3px">US</div>
<div class="tt" style="right:631px;top:616.8px;color:#3b8ae8;font-size:4.3px">Zip</div>
<div class="tt" style="left:396px;top:632px;font-size:4px;color:#8a8a8f">CARD INFO</div>
<div class="a" style="left:392px;top:638px;width:124px;height:24px;background:#fff;border-top:1px solid #e2e2e6"></div>
<div class="tt" style="right:631px;top:642.0px;color:#3b8ae8;font-size:4.3px">MasterCard</div>
<div class="tt" style="left:424px;top:642.0px;color:#222;font-size:4.3px">1234567890012</div>
<div class="tt" style="right:631px;top:654.2px;color:#3b8ae8;font-size:4.3px">Date</div>
<div class="tt" style="left:424px;top:654.2px;color:#222;font-size:4.3px">2012-03-02</div>
<div class="a" style="left:392px;top:712px;width:124px;height:15px;background:#f4f4f6;border-top:1px solid #dcdcdc"></div>
<svg style="left:398px;top:716px" width="6" height="6" viewBox="0 0 6 6"><path d="M.5 5.5L3.5 2.5" stroke="#888" stroke-width="1.2"/><circle cx="4.2" cy="1.8" r="1.5" fill="none" stroke="#888" stroke-width="1"/></svg>
<div class="tt" style="left:406px;top:716.5px;color:#9a9a9a;font-size:4px">Settings</div>
<div class="a" style="left:460px;top:716px;width:6px;height:6px;border-radius:50%;background:#8e8e8e"></div>
<div class="a" style="left:462.6px;top:717.5px;width:.9px;height:3px;background:#fff"></div>
<div class="tt" style="left:469px;top:716.5px;color:#9a9a9a;font-size:4px">About</div><div class="a" style="left:731px;top:443px;width:89px;height:284px;background:#fff"></div>
<div class="a" style="left:731px;top:443px;width:89px;height:20px;background:#eeeef0"></div>
<div class="a" style="left:735px;top:475px;width:84px;height:1px;background:#e4e4e4"></div>
<div class="a" style="left:735px;top:487px;width:84px;height:1px;background:#e4e4e4"></div>
<div class="a" style="left:735px;top:499px;width:84px;height:1px;background:#e4e4e4"></div>
<div class="a" style="left:735px;top:511px;width:84px;height:1px;background:#e4e4e4"></div>
<div class="a" style="left:735px;top:523px;width:84px;height:1px;background:#e4e4e4"></div>
<div class="a" style="left:735px;top:535px;width:84px;height:1px;background:#e4e4e4"></div>
<div class="a" style="left:735px;top:547px;width:84px;height:1px;background:#e4e4e4"></div>
<div class="a" style="left:735px;top:559px;width:84px;height:1px;background:#e4e4e4"></div>
<div class="a" style="left:735px;top:572px;width:84px;height:1px;background:#e4e4e4"></div>
<div class="a" style="left:735px;top:584px;width:84px;height:1px;background:#e4e4e4"></div>
<div class="a" style="left:735px;top:596px;width:84px;height:1px;background:#e4e4e4"></div>
<div class="a" style="left:735px;top:608px;width:84px;height:1px;background:#e4e4e4"></div>
<div class="a" style="left:735px;top:620px;width:84px;height:1px;background:#e4e4e4"></div>
<div class="a" style="left:735px;top:632px;width:84px;height:1px;background:#e4e4e4"></div>
<div class="a" style="left:735px;top:644px;width:84px;height:1px;background:#e4e4e4"></div>
<div class="a" style="left:735px;top:656px;width:84px;height:1px;background:#e4e4e4"></div>
<div class="a" style="left:735px;top:668px;width:84px;height:1px;background:#e4e4e4"></div>
<div class="a" style="left:735px;top:680px;width:84px;height:1px;background:#e4e4e4"></div>
<div class="a" style="left:735px;top:692px;width:84px;height:1px;background:#e4e4e4"></div>
<div class="a" style="left:735px;top:705px;width:84px;height:1px;background:#e4e4e4"></div>
<div class="a" style="left:731px;top:712px;width:89px;height:15px;background:#e2e2e4;border-top:1px solid #d6d6d6"></div>
<svg style="left:769px;top:716px" width="6" height="6" viewBox="0 0 6 6"><path d="M.5 5.5L5.5 .5" stroke="#3b8ae8" stroke-width="1.3"/></svg>
<div class="tt" style="left:777px;top:716.5px;color:#3b8ae8;font-size:4px">Orders</div>
<div class="tt" style="left:733px;top:444px;font-size:4px">15:52  Вт 24 марта</div>
<div class="tt" style="left:735px;top:452px;color:#2f7fe8;font-weight:bold">Done</div>
<div class="tt" style="left:768px;top:452px;font-weight:bold">Orders</div>
<div class="tt" style="left:810px;top:452px;color:#2f7fe8;font-size:9px;line-height:7px">+</div>
<div class="a" style="left:735px;top:466.0px;width:5.5px;height:5.5px;border-radius:50%;background:#f5302a"></div>
<div class="a" style="left:736.3px;top:468.4px;width:3px;height:.6px;background:#ffd0d0"></div>
<div class="tt" style="left:746px;top:463.0px;font-size:5.2px;color:#222">Bob Feather</div>
<div class="tt" style="left:746px;top:468.3px;font-size:3.4px;color:#333">1, FamilyAlbum, 2010-12-03</div>
<svg style="left:813px;top:467.0px" width="3" height="5" viewBox="0 0 3 5"><path d="M.4 .4L2.4 2.5.4 4.6" fill="none" stroke="#c4c4c8" stroke-width=".8"/></svg>
<div class="a" style="left:735px;top:478.1px;width:5.5px;height:5.5px;border-radius:50%;background:#f5302a"></div>
<div class="a" style="left:736.3px;top:480.5px;width:3px;height:.6px;background:#ffd0d0"></div>
<div class="tt" style="left:746px;top:475.1px;font-size:5.2px;color:#222">Samuel Clemens</div>
<div class="tt" style="left:746px;top:480.4px;font-size:3.4px;color:#333">2, MyMoney, 2009-12-12</div>
<svg style="left:813px;top:479.1px" width="3" height="5" viewBox="0 0 3 5"><path d="M.4 .4L2.4 2.5.4 4.6" fill="none" stroke="#c4c4c8" stroke-width=".8"/></svg>
<div class="a" style="left:735px;top:490.2px;width:5.5px;height:5.5px;border-radius:50%;background:#f5302a"></div>
<div class="a" style="left:736.3px;top:492.6px;width:3px;height:.6px;background:#ffd0d0"></div>
<div class="tt" style="left:746px;top:487.2px;font-size:5.2px;color:#222">Charles Dodgeson</div>
<div class="tt" style="left:746px;top:492.5px;font-size:3.4px;color:#333">1, MyMoney, 2006-05-12</div>
<svg style="left:813px;top:491.2px" width="3" height="5" viewBox="0 0 3 5"><path d="M.4 .4L2.4 2.5.4 4.6" fill="none" stroke="#c4c4c8" stroke-width=".8"/></svg>
<div class="a" style="left:735px;top:502.3px;width:5.5px;height:5.5px;border-radius:50%;background:#f5302a"></div>
<div class="a" style="left:736.3px;top:504.7px;width:3px;height:.6px;background:#ffd0d0"></div>
<div class="tt" style="left:746px;top:499.3px;font-size:5.2px;color:#222">John Smith Jr</div>
<div class="tt" style="left:746px;top:504.6px;font-size:3.4px;color:#333">1, MyMoney, 2009-05-07</div>
<svg style="left:813px;top:503.3px" width="3" height="5" viewBox="0 0 3 5"><path d="M.4 .4L2.4 2.5.4 4.6" fill="none" stroke="#c4c4c8" stroke-width=".8"/></svg>
<div class="a" style="left:735px;top:514.4px;width:5.5px;height:5.5px;border-radius:50%;background:#f5302a"></div>
<div class="a" style="left:736.3px;top:516.8px;width:3px;height:.6px;background:#ffd0d0"></div>
<div class="tt" style="left:746px;top:511.4px;font-size:5.2px;color:#222">Clare Jefferson</div>
<div class="tt" style="left:746px;top:516.7px;font-size:3.4px;color:#333">2, FamilyAlbum, 2009-04-05</div>
<svg style="left:813px;top:515.4px" width="3" height="5" viewBox="0 0 3 5"><path d="M.4 .4L2.4 2.5.4 4.6" fill="none" stroke="#c4c4c8" stroke-width=".8"/></svg>
<div class="a" style="left:735px;top:526.5px;width:5.5px;height:5.5px;border-radius:50%;background:#f5302a"></div>
<div class="a" style="left:736.3px;top:528.9px;width:3px;height:.6px;background:#ffd0d0"></div>
<div class="tt" style="left:746px;top:523.5px;font-size:5.2px;color:#222">Susan McLaren</div>
<div class="tt" style="left:746px;top:528.8px;font-size:3.4px;color:#333">1, MyMoney, 2008-05-12</div>
<svg style="left:813px;top:527.5px" width="3" height="5" viewBox="0 0 3 5"><path d="M.4 .4L2.4 2.5.4 4.6" fill="none" stroke="#c4c4c8" stroke-width=".8"/></svg>
<div class="a" style="left:735px;top:538.6px;width:5.5px;height:5.5px;border-radius:50%;background:#f5302a"></div>
<div class="a" style="left:736.3px;top:541.0px;width:3px;height:.6px;background:#ffd0d0"></div>
<div class="tt" style="left:746px;top:535.6px;font-size:5.2px;color:#222">Steve Johns</div>
<div class="tt" style="left:746px;top:540.9px;font-size:3.4px;color:#333">1, ScreenSaver, 2008-04-04</div>
<svg style="left:813px;top:539.6px" width="3" height="5" viewBox="0 0 3 5"><path d="M.4 .4L2.4 2.5.4 4.6" fill="none" stroke="#c4c4c8" stroke-width=".8"/></svg>
<div class="a" style="left:764.5px;top:477.5px;width:11px;height:11px;border-radius:50%;border:1.2px solid #f2b400;box-shadow:inset 0 0 0 .6px #e03a20,0 0 0 .4px #d84020"></div>
<div class="a" style="left:731px;top:443px;width:89px;height:284px;border:1px solid #e31e24"></div>
<div class="a" style="left:820px;top:443px;width:124px;height:284px;background:#efeff4"></div>
<div class="a" style="left:820px;top:443px;width:124px;height:20px;background:#f7f7f7;border-bottom:1px solid #e2e2e2"></div>
<div class="tt" style="left:876px;top:452px;font-weight:bold">Detail</div>
<div class="tt" style="left:911px;top:443.5px;font-size:4px">✈ ◉  100%</div>
<div class="a" style="left:933px;top:445px;width:6px;height:2.5px;background:#4cd964"></div>
<div class="a" style="left:940px;top:445.5px;width:1.5px;height:1.5px;background:#888"></div>
<div class="tt" style="left:824px;top:471px;font-size:4px;color:#8a8a8f">PRODUCT INFO</div>
<div class="a" style="left:820px;top:477px;width:124px;height:73px;background:#fff;border-top:1px solid #e2e2e6"></div>
<div class="tt" style="right:203px;top:481.0px;color:#3b8ae8;font-size:4.3px">Name</div>
<div class="a" style="left:824px;top:489px;width:120px;height:1px;background:#ebebef"></div>
<div class="tt" style="right:203px;top:493.2px;color:#3b8ae8;font-size:4.3px">Price</div>
<div class="a" style="left:824px;top:501px;width:120px;height:1px;background:#ebebef"></div>
<div class="tt" style="right:203px;top:505.4px;color:#3b8ae8;font-size:4.3px">Discount</div>
<div class="a" style="left:824px;top:514px;width:120px;height:1px;background:#ebebef"></div>
<div class="tt" style="right:203px;top:517.6px;color:#3b8ae8;font-size:4.3px">Quantity</div>
<div class="a" style="left:824px;top:526px;width:120px;height:1px;background:#ebebef"></div>
<div class="tt" style="right:203px;top:529.8px;color:#3b8ae8;font-size:4.3px">Date</div>
<div class="a" style="left:824px;top:538px;width:120px;height:1px;background:#ebebef"></div>
<div class="tt" style="right:203px;top:542.0px;color:#3b8ae8;font-size:4.3px">Total</div>
<div class="tt" style="left:824px;top:558px;font-size:4px;color:#8a8a8f">CUSTOMER INFO</div>
<div class="a" style="left:820px;top:564px;width:124px;height:61px;background:#fff;border-top:1px solid #e2e2e6"></div>
<div class="tt" style="right:203px;top:568.0px;color:#3b8ae8;font-size:4.3px">Name</div>
<div class="a" style="left:824px;top:576px;width:120px;height:1px;background:#ebebef"></div>
<div class="tt" style="right:203px;top:580.2px;color:#3b8ae8;font-size:4.3px">Street</div>
<div class="a" style="left:824px;top:588px;width:120px;height:1px;background:#ebebef"></div>
<div class="tt" style="right:203px;top:592.4px;color:#3b8ae8;font-size:4.3px">City</div>
<div class="a" style="left:824px;top:601px;width:120px;height:1px;background:#ebebef"></div>
<div class="tt" style="right:203px;top:604.6px;color:#3b8ae8;font-size:4.3px">State</div>
<div class="a" style="left:824px;top:613px;width:120px;height:1px;background:#ebebef"></div>
<div class="tt" style="right:203px;top:616.8px;color:#3b8ae8;font-size:4.3px">Zip</div>
<div class="tt" style="left:824px;top:632px;font-size:4px;color:#8a8a8f">CARD INFO</div>
<div class="a" style="left:820px;top:638px;width:124px;height:24px;background:#fff;border-top:1px solid #e2e2e6"></div>
<div class="a" style="left:824px;top:650px;width:120px;height:1px;background:#ebebef"></div>
<div class="tt" style="right:203px;top:654.2px;color:#3b8ae8;font-size:4.3px">Date</div>
<div class="a" style="left:820px;top:712px;width:124px;height:15px;background:#f4f4f6;border-top:1px solid #dcdcdc"></div>
<svg style="left:826px;top:716px" width="6" height="6" viewBox="0 0 6 6"><path d="M.5 5.5L3.5 2.5" stroke="#888" stroke-width="1.2"/><circle cx="4.2" cy="1.8" r="1.5" fill="none" stroke="#888" stroke-width="1"/></svg>
<div class="tt" style="left:834px;top:716.5px;color:#9a9a9a;font-size:4px">Settings</div>
<div class="a" style="left:888px;top:716px;width:6px;height:6px;border-radius:50%;background:#8e8e8e"></div>
<div class="a" style="left:890.6px;top:717.5px;width:.9px;height:3px;background:#fff"></div>
<div class="tt" style="left:897px;top:716.5px;color:#9a9a9a;font-size:4px">About</div>
</body></html>
